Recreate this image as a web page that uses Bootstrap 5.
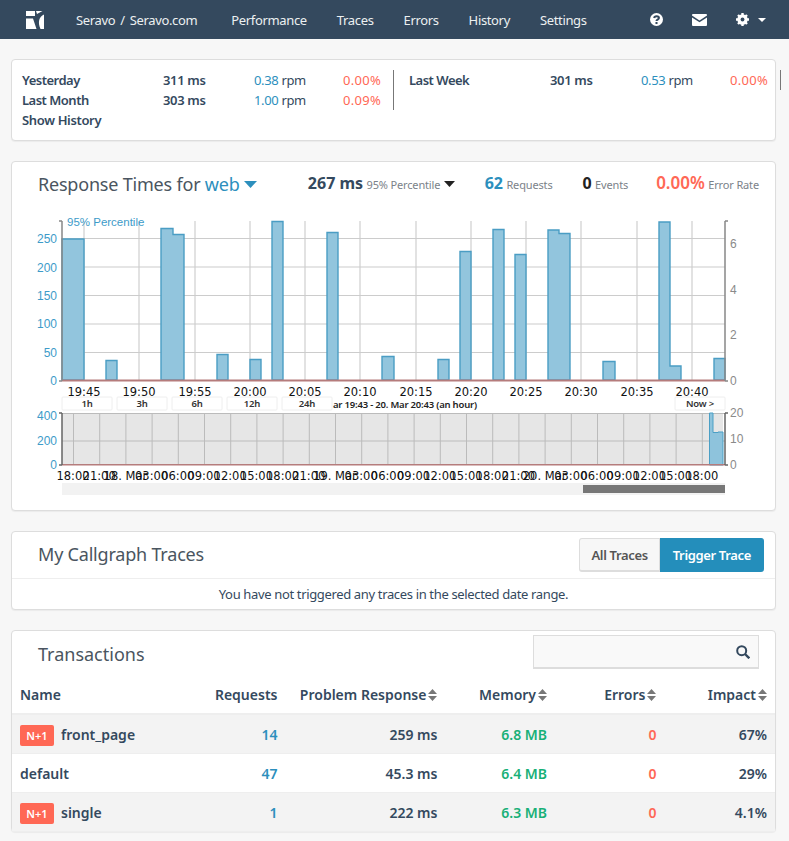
<!DOCTYPE html>
<html lang="en">
<head>
  <meta charset="UTF-8">
  <meta name="viewport" content="width=device-width, initial-scale=1.0">
  <title>Performance - Seravo.com</title>

  <!-- Bootstrap CSS -->
  <link href="https://cdn.jsdelivr.net/npm/bootstrap@5.3.0/dist/css/bootstrap.min.css" rel="stylesheet">
  <style>
    body { background: #f7f7f7; color: #34495e; font-family: "Noto Sans", "Open Sans", sans-serif; font-size: 13px; line-height: 20px; letter-spacing: -.35px; }
    .top-bar { background: #34495e; height: 39px; padding: 0 0 0 26px; }
    .top-bar a { color: #ecf0f1; text-decoration: none; font-size: 13px; white-space: nowrap; }
    .top-links { gap: 30px; margin-left: 34px; }
    .app-name { margin-left: 32px; gap: 5px; }
    .top-icons { position: absolute; top: 0; left: 650px; height: 39px; }
    .top-icons svg + svg { margin-left: 29px; }
    .top-icons svg.caret-ico { margin-left: 9px; }
    .page-wrap { padding: 20px 13px 0 11px; }
    .panel-box { background: #fff; border: 1px solid #ddd; border-radius: 4px; box-shadow: 0 1px 1px rgba(0,0,0,.05); margin-bottom: 20px; }
    .stat-top { padding: 10px 0 0 10px; gap: 15px; width: 790px; align-items: flex-start; }
    .stat-block { width: 372px; padding-right: 12px; border-right: 1px solid #777; font-weight: 600; }
    .stat-row { display: flex; height: 20px; }
    .stat-name { width: 141px; letter-spacing: -.5px; }
    .stat-ms { width: 91px; }
    .stat-rpm { width: 70px; font-weight: 400; }
    .stat-err { width: 57px; text-align: right; font-weight: 400; letter-spacing: .3px; color: #ff6855; }
    .show-history { padding-left: 10px; font-weight: 600; }
    .blue-txt { color: #2c8fbd; }
    .red-txt { color: #ff6855; }
    .panel-title { font-size: 18px; font-weight: 400; color: #4a5560; margin: 0; line-height: 26px; letter-spacing: -.2px; }
    .chart-head { height: 44px; padding: 0 16px 0 26px; }
    .head-stats { gap: 28px; letter-spacing: 0; }
    .head-stats > :first-child { margin-right: 2px; }
    .head-stats > :nth-child(2) { margin-right: 2px; }
    .big-stat { font-size: 16px; font-weight: 700; }
    .big-err { font-size: 17px; font-weight: 600; }
    .small-note { font-size: 11px; color: #7b8289; font-weight: 400; letter-spacing: -.15px; }
    .chart-svg { display: block; letter-spacing: 0; }
    .chart-svg text { font-family: "Liberation Sans", sans-serif; }
    .chart-svg text.time-txt { font-family: "DejaVu Sans", sans-serif; }
    .chart-svg text.ctrl-txt { font-family: "Noto Sans", sans-serif; font-weight: 600; letter-spacing: -.2px; }
    .trace-head { height: 47px; border-bottom: 1px solid #eee; padding: 0 11px 0 26px; }
    .trace-head .panel-title { margin-bottom: 2px; }
    .trace-btn { font-size: 13px; font-weight: 600; letter-spacing: -.35px; line-height: 20px; padding: 6px 11px; height: 34px; border-radius: 3px 0 0 3px; background: #f7f7f7; color: #555; border: 1px solid #ddd; border-bottom-width: 2px; }
    .trace-btn.active-btn { padding: 6px 12px; background: #248ebb; color: #fff; border-color: #248ebb; border-radius: 0 3px 3px 0; }
    .trace-note { line-height: 30px; }
    .tx-head { padding: 0 16px 0 26px; height: 45px; }
    .tx-head .panel-title { margin-top: 10px; letter-spacing: 0; }
    .search-box { width: 226px; height: 34px; margin-top: 4px; border: 1px solid #ddd; border-bottom-width: 2px; background: #f9f9f9; }
    .tx-table { --bs-table-color: #34495e; --bs-table-bg: transparent; margin: 0; font-size: 14px; font-weight: 600; letter-spacing: 0; }
    .tx-table th, .tx-table td { padding: 0 9px 0 8px; vertical-align: middle; background: transparent; box-shadow: none; border-color: #eee; }
    .tx-table th { height: 38px; font-weight: 600; border-bottom: 2px solid #eee; }
    .tx-table td { height: 39px; padding-top: 3px; }
    .tx-table tbody tr:nth-child(odd) { background: #f3f3f3; }
    .tx-table td.num-blue { color: #2c8fbd; }
    .tx-table td.num-red { color: #ff6855; }
    .tx-table td.num-green { color: #18b077; }
    .tx-table tr > :last-child { padding-right: 8px; }
    .name-col { width: 188px; }
    .req-col { width: 88px; }
    .prob-col { width: 160px; }
    .rest-col { width: 110px; }
    .nplus { display: inline-block; background: #ff6855; color: #fff; font-size: 11px; font-weight: 600; line-height: 21px; width: 34px; text-align: center; border-radius: 2px; margin-right: 7px; }
    .sort-arrows { display: inline-block; vertical-align: -1px; margin-left: 2px; }
  </style>
</head>
<body>

  <nav class="top-bar d-flex align-items-center position-relative">
    <svg width="18" height="18" viewBox="0 0 18 18"><path fill="#fff" d="M0 0h9v5H0zM0 7.500h7l3.500 10.500H0zM18 3.500C13 6 11.500 11 14.500 18H18zM10 0h6.500L11 3z"/></svg>
    <a class="app-name d-flex" href="#"><span>Seravo</span><span>/</span><span>Seravo.com</span></a>
    <div class="d-flex top-links">
      <a href="#">Performance</a>
      <a href="#">Traces</a>
      <a href="#">Errors</a>
      <a href="#">History</a>
      <a href="#">Settings</a>
    </div>
    <div class="top-icons d-flex align-items-center">
      <svg width="13" height="13" viewBox="0 0 14 14"><circle cx="7" cy="7" r="7" fill="#fff"/><path fill="none" stroke="#34495e" stroke-width="2.200" d="M4.400 5.400C4.800 2.800 9.600 2.900 9.600 5.400 9.600 7.200 7 7 7 8.600"/><rect x="5.900" y="9.700" width="2.200" height="2.200" fill="#34495e"/></svg>
      <svg width="15" height="12" viewBox="0 0 15 12"><path fill="#fff" d="M1 0h13a1 1 0 0 1 1 1v.6L7.500 6.500 0 1.600V1a1 1 0 0 1 1-1zM0 3.400l7.500 4.900L15 3.400V11a1 1 0 0 1-1 1H1a1 1 0 0 1-1-1z"/></svg>
      <svg width="13" height="13" viewBox="0 0 13 13"><circle cx="6.500" cy="6.500" r="3.700" fill="none" stroke="#fff" stroke-width="3"/><path stroke="#fff" stroke-width="2.400" d="M6.500 0v13M0 6.500h13M2 2l9 9M11 2l-9 9"/><circle cx="6.500" cy="6.500" r="1.900" fill="#34495e"/></svg>
      <svg class="caret-ico" width="8" height="4" viewBox="0 0 8 4"><path fill="#fff" d="M0 0h8L4 4z"/></svg>
    </div>
  </nav>

  <div class="page-wrap">
    <!-- quick stats -->
    <div class="panel-box" style="height:82px">
      <div class="d-flex stat-top">
        <div class="stat-block">
          <div class="stat-row"><span class="stat-name">Yesterday</span><span class="stat-ms">311 ms</span><span class="stat-rpm"><span class="blue-txt">0.38</span> rpm</span><span class="stat-err">0.00%</span></div>
          <div class="stat-row"><span class="stat-name">Last Month</span><span class="stat-ms">303 ms</span><span class="stat-rpm"><span class="blue-txt">1.00</span> rpm</span><span class="stat-err">0.09%</span></div>
        </div>
        <div class="stat-block">
          <div class="stat-row"><span class="stat-name">Last Week</span><span class="stat-ms">301 ms</span><span class="stat-rpm"><span class="blue-txt">0.53</span> rpm</span><span class="stat-err">0.00%</span></div>
        </div>
      </div>
      <div class="show-history">Show History</div>
    </div>

    <!-- response times -->
    <div class="panel-box" style="height:350px">
      <div class="chart-head d-flex align-items-center">
        <h2 class="panel-title">Response Times for <span class="blue-txt">web</span> <svg width="13" height="7" viewBox="0 0 13 7" style="vertical-align:3px"><path fill="#2c8fbd" d="M0 0h13L6.500 7z"/></svg></h2>
        <div class="ms-auto d-flex align-items-baseline head-stats">
          <span><span class="big-stat">267 ms</span> <span class="small-note">95% Percentile</span> <svg width="11" height="6" viewBox="0 0 11 6" style="vertical-align:2px"><path fill="#222" d="M0 0h11L5.500 6z"/></svg></span>
          <span><span class="big-stat blue-txt">62</span> <span class="small-note">Requests</span></span>
          <span><span class="big-stat" style="color:#222">0</span> <span class="small-note">Events</span></span>
          <span><span class="big-err red-txt">0.00%</span> <span class="small-note">Error Rate</span></span>
        </div>
      </div>
      <div id="chart-holder"></div>
    </div>

    <!-- callgraph traces -->
    <div class="panel-box" style="height:79px">
      <div class="trace-head d-flex align-items-center justify-content-between">
        <h2 class="panel-title">My Callgraph Traces</h2>
        <div class="d-flex">
          <button type="button" class="btn trace-btn">All Traces</button>
          <button type="button" class="btn trace-btn active-btn">Trigger Trace</button>
        </div>
      </div>
      <p class="text-center m-0 trace-note">You have not triggered any traces in the selected date range.</p>
    </div>

    <!-- transactions -->
    <div class="panel-box" style="height:202px">
      <div class="tx-head d-flex align-items-start justify-content-between">
        <h2 class="panel-title">Transactions</h2>
        <div class="search-box d-flex align-items-center justify-content-end pe-2">
          <svg width="14" height="14" viewBox="0 0 14 14"><circle cx="5.700" cy="5.700" r="4.500" fill="none" stroke="#34495e" stroke-width="2"/><path stroke="#34495e" stroke-width="2.400" d="M9 9l4.300 4.300"/></svg>
        </div>
      </div>
      <table class="table tx-table">
        <colgroup><col class="name-col"><col class="req-col"><col class="prob-col"><col class="rest-col"><col class="rest-col"><col class="rest-col"></colgroup>
        <thead>
          <tr>
            <th>Name</th>
            <th class="text-end">Requests</th>
            <th class="text-end text-nowrap">Problem Response<svg class="sort-arrows" width="9" height="12" viewBox="0 0 9 12"><path fill="#777" d="M0 5l4.500-5L9 5zM0 7h9l-4.500 5z"/></svg></th>
            <th class="text-end text-nowrap">Memory<svg class="sort-arrows" width="9" height="12" viewBox="0 0 9 12"><path fill="#777" d="M0 5l4.500-5L9 5zM0 7h9l-4.500 5z"/></svg></th>
            <th class="text-end text-nowrap">Errors<svg class="sort-arrows" width="9" height="12" viewBox="0 0 9 12"><path fill="#777" d="M0 5l4.500-5L9 5zM0 7h9l-4.500 5z"/></svg></th>
            <th class="text-end text-nowrap">Impact<svg class="sort-arrows" width="9" height="12" viewBox="0 0 9 12"><path fill="#777" d="M0 5l4.500-5L9 5zM0 7h9l-4.500 5z"/></svg></th>
          </tr>
        </thead>
        <tbody>
          <tr><td><span class="nplus">N+1</span>front_page</td><td class="text-end num-blue">14</td><td class="text-end">259 ms</td><td class="text-end num-green">6.8 MB</td><td class="text-end num-red">0</td><td class="text-end">67%</td></tr>
          <tr><td>default</td><td class="text-end num-blue">47</td><td class="text-end">45.3 ms</td><td class="text-end num-green">6.4 MB</td><td class="text-end num-red">0</td><td class="text-end">29%</td></tr>
          <tr><td><span class="nplus">N+1</span>single</td><td class="text-end num-blue">1</td><td class="text-end">222 ms</td><td class="text-end num-green">6.3 MB</td><td class="text-end num-red">0</td><td class="text-end">4.1%</td></tr>
        </tbody>
      </table>
    </div>
  </div>

  <script>
    // chart is drawn in page coords, viewBox starts where the panel body starts
    const OX = 12, OY = 206;
    // bars as [x0, x1, top]; touching bars are joined into one outline below
    const bars = [[62,84,239],[106,117,360.5],[161,173,228.5],[173,184,234.5],[217,228,354.5],[250,261,359.5],[272,283,221.5],[327,338,232.5],[382,394,356.5],[438,449,359.5],[460,471,251.5],[493,504,229.5],[515,526,254.5],[548,559,230],[559,570,233.5],[603,615,361.5],[659,670,222],[670,681,366],[714,725,358.5]];
    const grid = [238,266.5,295,323.5,352];
    const vgrid = [84,139,195,250,305,360,416,471,526,581,637,692];
    const times = ['19:45','19:50','19:55','20:00','20:05','20:10','20:15','20:20','20:25','20:30','20:35','20:40'];
    const navLabels = ['18:00','21:00','18. Mar','03:00','06:00','09:00','12:00','15:00','18:00','21:00','19. Mar','03:00','06:00','09:00','12:00','15:00','18:00','21:00','20. Mar','03:00','06:00','09:00','12:00','15:00','18:00'];
    const ranges = ['1h','3h','6h','12h','24h'];
    let s = '';
    const txt = (x, y, t, anchor, fill, size, cls) => `<text x="${x}" y="${y}" text-anchor="${anchor}" fill="${fill}" font-size="${size}" class="${cls || ''}">${t}</text>`;
    const BLUE = '#3d9bc9', GREY = '#8a8a8a';

    vgrid.forEach(x => { s += `<rect x="${x-1}" y="221" width="2" height="160" fill="#e2e2e2"/>`; });
    grid.forEach(y => { s += `<rect x="62" y="${y}" width="663" height="1" fill="#ccc"/>`; });

    let d = '', prevEnd = null;
    bars.forEach((b, i) => {
      d += prevEnd === b[0] ? `V${b[2]}H${b[1]}` : `M${b[0]} 380V${b[2]}H${b[1]}`;
      const next = bars[i + 1];
      if (!next || next[0] !== b[1]) d += 'V380Z';
      prevEnd = b[1];
    });
    s += `<path d="${d}" fill="#92c5dd" stroke="#4a9dc4" stroke-width="1.400"/>`;
    s += `<rect x="62" y="379.500" width="663" height="2" fill="#b57c7c"/>`;
    s += `<path d="M62 221h-3M62 221v160M62 381h-3M725 221h3M725 221v160M725 381h3" fill="none" stroke="#888" stroke-width="1.500"/>`;
    [['250',243],['200',271.5],['150',300],['100',328],['50',357],['0',385]].forEach(l => { s += txt(57, l[1], l[0], 'end', BLUE, 12); });
    [['6',248],['4',293.5],['2',339],['0',385]].forEach(l => { s += txt(730, l[1], l[0], 'start', GREY, 12); });
    s += txt(67, 226, '95% Percentile', 'start', BLUE, 11.5);
    times.forEach((t, i) => { s += txt(vgrid[i], 396, t, 'middle', '#111', 11.5, 'time-txt'); });

    // range selector
    ranges.forEach((r, i) => {
      const x = 62 + i * 55;
      s += `<rect x="${x}" y="397" width="50" height="13" rx="1" fill="#fff" stroke="#eee"/>`;
      s += txt(x + 25, 407, r, 'middle', '#333', 9.5, 'ctrl-txt');
    });
    s += `<rect x="675" y="397" width="50" height="13" rx="1" fill="#fff" stroke="#eee"/>`;
    s += txt(700, 407, 'Now &gt;', 'middle', '#333', 9.5, 'ctrl-txt');
    s += txt(333, 408, 'ar 19:43 - 20. Mar 20:43 (an hour)', 'start', '#222', 9.5, 'ctrl-txt');

    // navigator
    s += `<rect x="62" y="413" width="661" height="52" fill="#e6e6e6"/>`;
    navLabels.forEach((t, i) => {
      const x = 73 + i * 26.2;
      s += `<rect x="${x}" y="413" width="1" height="52" fill="#bbb"/>`;
      s += txt(x, 480, t, 'middle', '#111', 11.5, 'time-txt');
    });
    [413, 440.5].forEach(y => { s += `<rect x="62" y="${y}" width="663" height="1" fill="#bbb"/>`; });
    s += `<path d="M709.500 465V413h3.500v19.500h5v-.5h5V465z" fill="#8ec3dc" stroke="#4b9fc5"/>`;
    s += `<rect x="62" y="464" width="663" height="1.500" fill="#b57c7c"/>`;
    s += `<path d="M62 413h-3M62 413v52M62 465h-3M725 413h3M725 413v52M725 465h3" fill="none" stroke="#666" stroke-width="1.500"/>`;
    [['400',420],['200',445],['0',469]].forEach(l => { s += txt(57, l[1], l[0], 'end', BLUE, 12); });
    [['20',417],['10',443],['0',469]].forEach(l => { s += txt(730, l[1], l[0], 'start', GREY, 12); });

    // scrollbar
    s += `<rect x="62" y="483" width="663" height="12" fill="#f2f2f2"/><rect x="583" y="485" width="142" height="8" fill="#777"/>`;

    document.getElementById('chart-holder').innerHTML =
      `<svg class="chart-svg" width="763" height="304" viewBox="${OX} ${OY} 763 304">${s}</svg>`;
  </script>

  <!-- Bootstrap JS Bundle -->
  <script src="https://cdn.jsdelivr.net/npm/bootstrap@5.3.0/dist/js/bootstrap.bundle.min.js"></script>
</body>
</html>
